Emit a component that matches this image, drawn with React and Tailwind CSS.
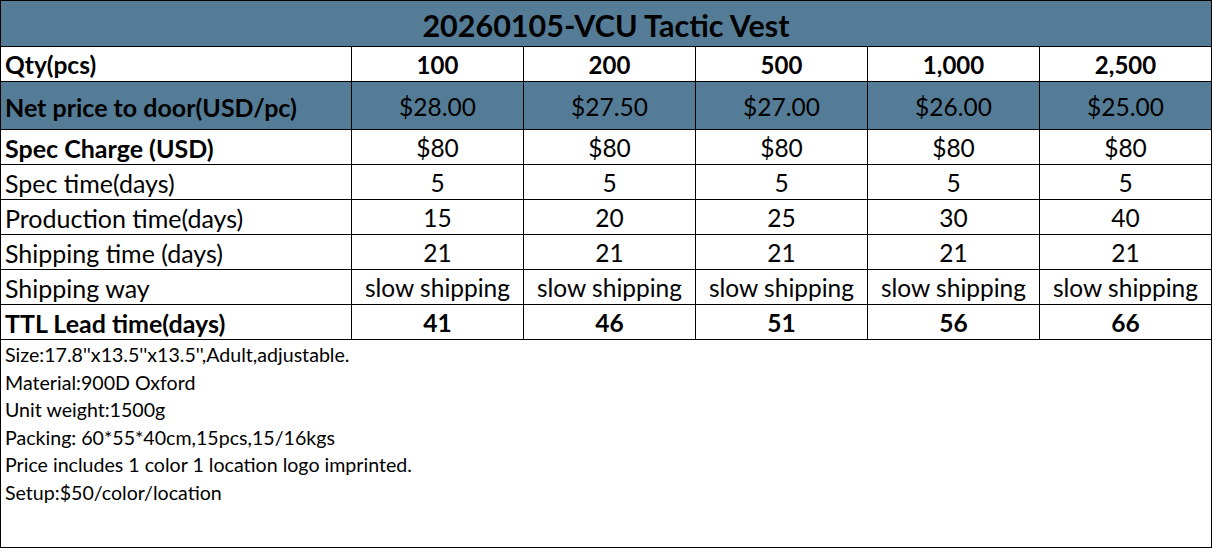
import React from "react";

const cols = ["100", "200", "500", "1,000", "2,500"];
const prices = ["$28.00", "$27.50", "$27.00", "$26.00", "$25.00"];

const rows = [
  { label: "Spec Charge (USD)", bold: true, vals: ["$80", "$80", "$80", "$80", "$80"], vb: false },
  { label: "Spec time(days)", bold: false, vals: ["5", "5", "5", "5", "5"], vb: false },
  { label: "Production time(days)", bold: false, vals: ["15", "20", "25", "30", "40"], vb: false },
  { label: "Shipping time (days)", bold: false, vals: ["21", "21", "21", "21", "21"], vb: false },
  { label: "Shipping way", bold: false, vals: Array(5).fill("slow shipping"), vb: false },
  { label: "TTL Lead time(days)", bold: true, vals: ["41", "46", "51", "56", "66"], vb: true },
];

const notes = [
  "Size:17.8''x13.5''x13.5'',Adult,adjustable.",
  "Material:900D Oxford",
  "Unit weight:1500g",
  "Packing: 60*55*40cm,15pcs,15/16kgs",
  "Price includes 1 color 1 location logo imprinted.",
  "Setup:$50/color/location",
];

export default function App() {
  return (
    <div className="w-[1212px] h-[551px] bg-white" style={{ fontFamily: "Lato, 'Liberation Sans', sans-serif" }}>
      <div className="grid grid-cols-[350px_repeat(5,171px)] gap-px bg-black p-px text-black">
        <div className="col-span-6 h-[45px] bg-[#557c96] flex items-center justify-center text-[30.5px] font-bold leading-none pt-[3px]">
          20260105-VCU Tactic Vest
        </div>

        <div className="h-[34px] bg-white flex items-center pl-[4px] text-[24.5px] font-bold leading-none pt-[2px]">Qty(pcs)</div>
        {cols.map((c) => (
          <div key={c} className="h-[34px] bg-white flex items-center justify-center text-[24px] font-bold leading-none pt-[2px]">{c}</div>
        ))}

        <div className="h-[47px] bg-[#557c96] flex items-center pl-[4px] text-[25px] font-bold leading-none pt-[3px]">Net price to door(USD/pc)</div>
        {prices.map((p) => (
          <div key={p} className="h-[47px] bg-[#557c96] flex items-center justify-center text-[24.5px] leading-none pt-[3px]">{p}</div>
        ))}

        {rows.map((r) => (
          <React.Fragment key={r.label}>
            <div className={`h-[34px] bg-white flex items-center pl-[4px] text-[25px] leading-none pt-[2px] ${r.bold ? "font-bold" : ""}`}>{r.label}</div>
            {r.vals.map((v, i) => (
              <div key={i} className={`h-[34px] bg-white flex items-center justify-center text-[24.5px] leading-none pt-[2px] ${r.vb ? "font-bold" : ""}`}>{v}</div>
            ))}
          </React.Fragment>
        ))}

        <div className="col-span-6 h-[207px] bg-white flex flex-col pl-[4px] pt-[1px] text-[19.6px]">
          {notes.map((n) => (
            <div key={n} className="h-[27.6px] leading-[27.6px]">{n}</div>
          ))}
        </div>
      </div>
    </div>
  );
}
